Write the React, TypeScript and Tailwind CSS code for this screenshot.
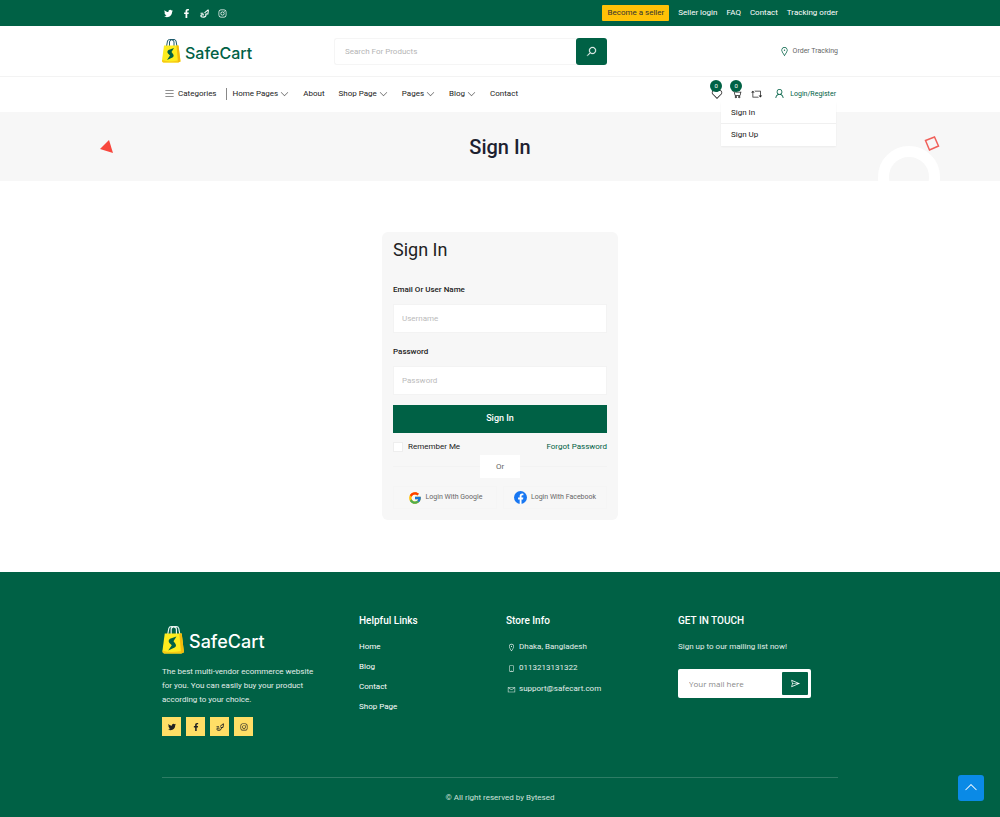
import React from 'react';
import {
  LiaAngleDownSolid,
  LiaAngleUpSolid,
  LiaBarsSolid,
  LiaEnvelope,
  LiaHeart,
  LiaMapMarkerSolid,
  LiaMobileSolid,
  LiaPaperPlane,
  LiaRetweetSolid,
  LiaSearchSolid,
  LiaShoppingCartSolid,
  LiaUser,
} from 'react-icons/lia';
import { FaFacebookF, FaInstagram, FaTwitter } from 'react-icons/fa';
import { FcGoogle } from 'react-icons/fc';

const Artist: React.FC<{ size: number }> = ({ size }) => (
  <svg viewBox="0 0 16 16" width={size} height={size} fill="none" stroke="currentColor" aria-hidden="true">
    <path d="M15 1 8 7M1 7.500h5M10 9h4l1-7" strokeWidth="1.800" />
    <path d="M10 8.500c2 3-.5 6-4 6-3 0-4.500-1-4.500-2.500S4 10 7 10.500" strokeWidth="2" />
  </svg>
);

const socials = [
  { label: 'Twitter', icon: FaTwitter },
  { label: 'Facebook', icon: FaFacebookF },
  { label: 'Community', icon: Artist },
  { label: 'Instagram', icon: FaInstagram },
];

const menu = [
  { label: 'Home Pages', sub: true },
  { label: 'About', sub: false },
  { label: 'Shop Page', sub: true },
  { label: 'Pages', sub: true },
  { label: 'Blog', sub: true },
  { label: 'Contact', sub: false },
];

const Bag: React.FC<{ className: string; handle: string }> = ({ className, handle }) => (
  <svg viewBox="0 0 38 48" className={className} aria-hidden="true">
    <path d="M9 15 11 4q1-3 4-3h9q3 0 4 3l2 11M15 14V6q0-4 4-4M24 14V6q0-4-4-4" fill="none" stroke={handle} strokeWidth="2" />
    <path d="M4 13h29l4 32-4 2H3q-3 0-3-4z" fill="#fdec1e" />
    <path d="M29 13h4l4 32-5 2z" fill="#f2b90c" />
    <path d="M0 42q12 5 32 1v4H3q-3 0-3-4z" fill="#f6c915" />
    <path d="M24 18 13 22q-4 3-1 7l4 4-6 9 11-5q4-3 1-7l-3-4z" fill="#006145" />
  </svg>
);

const TopBar = () => (
  <div className="bg-[#006145] text-white">
    <div className="mx-auto flex h-[26px] max-w-[676px] items-center justify-between">
      <div className="flex items-center gap-[9px] pl-[2px]">
        {socials.map(({ label, icon: Icon }) => (
          <a key={label} href="#" aria-label={label}>
            <Icon size={9} />
          </a>
        ))}
      </div>
      <div className="flex items-center gap-[9px] text-[8px] leading-4">
        <a href="#" className="rounded-[1px] bg-[#ffc107] px-[5px] text-[#333]">Become a seller</a>
        <a href="#">Seller login</a>
        <a href="#">FAQ</a>
        <a href="#">Contact</a>
        <a href="#">Tracking order</a>
      </div>
    </div>
  </div>
);

const SearchRow = () => (
  <div className="border-b border-[#f3f3f3]">
    <div className="mx-auto flex h-[50px] max-w-[676px] items-center">
      <a href="#" className="flex w-[172px] items-center gap-1">
        <Bag className="h-6 w-[19px]" handle="#1c5a6b" />
        <span className="pt-1 font-['Inter',sans-serif] text-[16px] leading-5 font-medium text-[#006145]">SafeCart</span>
      </a>
      <form className="flex w-[273px]" onSubmit={(e) => e.preventDefault()}>
        <input
          type="text"
          aria-label="Search"
          placeholder="Search For Products"
          className="h-[27px] min-w-0 flex-1 rounded-l-[3px] border border-r-0 border-[#f5f5f5] px-[10px] text-[8px] outline-none placeholder:text-[#b5b5b5]"
        />
        <button type="submit" aria-label="Search" className="flex h-[27px] w-[31px] items-center justify-center rounded-[3px] bg-[#006145] text-white">
          <LiaSearchSolid size={11} strokeWidth={1} />
        </button>
      </form>
      <a href="#" className="ml-auto flex items-center gap-[3px] text-[7px] leading-4 text-[#666]">
        <LiaMapMarkerSolid size={11} className="text-[#006145]" />
        Order Tracking
      </a>
    </div>
  </div>
);

const Counter: React.FC<{ label: string; icon: React.ReactNode }> = ({ label, icon }) => (
  <a href="#" aria-label={label} className="relative">
    {icon}
    <span className="absolute -top-2 -left-px flex h-3 w-3 items-center justify-center rounded-full bg-[#006145] text-[6px] text-white">0</span>
  </a>
);

const NavRow = () => (
  <nav>
    <div className="mx-auto flex h-[35px] max-w-[676px] items-center pb-[2px] text-[8px] leading-4 text-[#222]">
      <button type="button" className="flex items-center gap-[3px] pl-[2px]">
        <LiaBarsSolid size={11} />
        Categories
      </button>
      <span className="ml-[9px] h-3 w-px bg-[#888]" />
      <ul className="flex items-center gap-[14px] pl-[6px]">
        {menu.map(({ label, sub }) => (
          <li key={label}>
            <a href="#" className="flex items-center gap-[2px]">
              {label}
              {sub && <LiaAngleDownSolid size={9} className="text-[#666]" />}
            </a>
          </li>
        ))}
      </ul>
      <div className="ml-auto flex items-center gap-2">
        <Counter label="Wishlist" icon={<LiaHeart size={12} />} />
        <Counter label="Cart" icon={<LiaShoppingCartSolid size={12} />} />
        <a href="#" aria-label="Compare">
          <LiaRetweetSolid size={12} />
        </a>
        <div className="relative pr-[2px] pl-[2px]">
          <a href="#" className="flex items-center gap-1 text-[7px] text-[#006145]">
            <LiaUser size={13} />
            Login/Register
          </a>
          <div className="absolute top-4 right-[2px] z-10 w-[115px] bg-white text-[8px] text-[#222] shadow-xs">
            <a href="#" className="block border-b border-[#f0f0f0] px-[10px] leading-[21px]">Sign In</a>
            <a href="#" className="block px-[10px] leading-[22px]">Sign Up</a>
          </div>
        </div>
      </div>
    </div>
  </nav>
);

const Banner = () => (
  <div className="relative flex h-[69px] items-center justify-center overflow-hidden bg-[#f7f7f7]">
    <h2 className="text-[20px] leading-6 font-medium text-[#1d2130]">Sign In</h2>
    <svg viewBox="0 0 14 14" className="absolute top-7 left-[10%] h-[14px] w-[14px]" aria-hidden="true">
      <path d="M9 0 13 13 0 9z" fill="#f8473d" />
    </svg>
    <span className="absolute top-[34px] right-[6%] h-[62px] w-[62px] rounded-full border-[11px] border-white" />
    <svg viewBox="0 0 16 16" className="absolute top-6 right-[6%] h-4 w-4" aria-hidden="true">
      <path d="m1.500 4.500 9-3.500 4 9-9 4z" fill="none" stroke="#f0605a" strokeWidth="1.500" />
    </svg>
  </div>
);

const LoginForm = () => (
  <form
    className="mx-auto mt-[51px] mb-[52px] w-full max-w-[236px] rounded-[6px] bg-[#f7f7f7] px-[11px] pt-[5px] pb-[11px] text-[#222]"
    onSubmit={(e) => e.preventDefault()}
  >
    <h3 className="text-[18px] leading-[26px]">Sign In</h3>
    <label htmlFor="username" className="mt-[19px] block text-[8px] leading-4 font-medium">Email Or User Name</label>
    <input
      id="username"
      type="text"
      placeholder="Username"
      className="mt-[6px] block h-[29px] w-full border border-[#f3f3f3] bg-white px-2 text-[8px] outline-none placeholder:text-[#bbb]"
    />
    <label htmlFor="password" className="mt-[11px] block text-[8px] leading-4 font-medium">Password</label>
    <input
      id="password"
      type="password"
      placeholder="Password"
      className="mt-[6px] block h-[29px] w-full border border-[#f3f3f3] bg-white px-2 text-[8px] outline-none placeholder:text-[#bbb]"
    />
    <button type="submit" className="mt-[10px] block h-7 w-full bg-[#006145] text-[9px] font-medium text-white">Sign In</button>
    <div className="mt-[6px] flex items-center justify-between text-[8px] leading-4">
      <label className="flex items-center gap-[5px]">
        <input type="checkbox" className="h-[10px] w-[10px] appearance-none border border-[#eee] bg-white" />
        Remember Me
      </label>
      <a href="#" className="text-[#006145]">Forgot Password</a>
    </div>
    <div className="flex items-center">
      <span className="h-px flex-1 bg-[#f3f3f3]" />
      <span className="w-10 bg-white text-center text-[8px] leading-[23px] text-[#666]">Or</span>
      <span className="h-px flex-1 bg-[#f3f3f3]" />
    </div>
    <div className="mt-2 flex justify-between text-[7px] text-[#666]">
      <button type="button" className="flex h-[23px] w-[104px] items-center justify-center gap-1 border border-[#f5f5f5]">
        <FcGoogle size={14} />
        Login With Google
      </button>
      <button type="button" className="flex h-[23px] w-[104px] items-center justify-center gap-1 border border-[#f5f5f5]">
        <svg viewBox="0 0 24 24" className="h-[13px] w-[13px]" aria-hidden="true">
          <circle cx="12" cy="12" r="12" fill="#1877f2" />
          <path d="M16.700 15.500l.5-3.500h-3.300V9.800c0-1 .5-1.900 2-1.900h1.500V5c-4.600-.9-6.900.7-6.900 4.300V12H7.500v3.500h3V24h3.400v-8.500z" fill="#fff" />
        </svg>
        Login With Facebook
      </button>
    </div>
  </form>
);

const Footer = () => (
  <footer className="relative bg-[#006145] text-white">
    <div className="mx-auto max-w-[676px]">
      <div className="flex h-[206px] items-start border-b border-[#2d7d65] pt-[41px] text-[8px]">
        <div className="w-[197px] pt-[13px]">
          <a href="#" className="flex items-center gap-1">
            <Bag className="h-7 w-[23px]" handle="#e8f4f0" />
            <span className="pt-1 font-['Inter',sans-serif] text-[18px] leading-6 font-medium">SafeCart</span>
          </a>
          <p className="mt-[11px] w-[160px] leading-[14px] text-[#e3eeea]">
            The best multi-vendor ecommerce website for you. You can easily buy your product according to your choice.
          </p>
          <div className="mt-[10px] flex gap-[5px]">
            {socials.map(({ label, icon: Icon }) => (
              <a key={label} href="#" aria-label={label} className="flex h-[19px] w-[19px] items-center justify-center bg-[#ffde66] text-[#222]">
                <Icon size={8} />
              </a>
            ))}
          </div>
        </div>
        <div className="w-[147px]">
          <h4 className="text-[10px] leading-4 font-medium">Helpful Links</h4>
          <ul className="mt-[10px] flex flex-col gap-1 leading-4">
            <li><a href="#">Home</a></li>
            <li><a href="#">Blog</a></li>
            <li><a href="#">Contact</a></li>
            <li><a href="#">Shop Page</a></li>
          </ul>
        </div>
        <div className="w-[172px]">
          <h4 className="text-[10px] leading-4 font-medium">Store Info</h4>
          <ul className="mt-[10px] flex flex-col gap-[5px] leading-4 text-[#e3eeea]">
            <li className="flex items-center gap-[3px] pl-[1px]"><LiaMapMarkerSolid size={9} />Dhaka, Bangladesh</li>
            <li className="flex items-center gap-[3px] pl-[1px]"><LiaMobileSolid size={9} />0113213131322</li>
            <li className="flex items-center gap-[3px] pl-[1px]"><LiaEnvelope size={9} />support@safecart.com</li>
          </ul>
        </div>
        <div className="flex-1">
          <h4 className="text-[10px] leading-4 font-medium">GET IN TOUCH</h4>
          <p className="mt-[10px] leading-4 text-[#e3eeea]">Sign up to our mailing list now!</p>
          <form className="mt-[14px] flex h-[29px] w-[133px] items-center rounded-[2px] bg-white pr-[3px]" onSubmit={(e) => e.preventDefault()}>
            <input
              type="email"
              aria-label="Your mail"
              placeholder="Your mail here"
              className="min-w-0 flex-1 pl-[11px] font-['Open_Sans',sans-serif] text-[8px] outline-none placeholder:text-[#888]"
            />
            <button type="submit" aria-label="Subscribe" className="flex h-[23px] w-[26px] items-center justify-center rounded-[1px] bg-[#006145]">
              <LiaPaperPlane size={11} />
            </button>
          </form>
        </div>
      </div>
      <p className="pt-3 pb-[11px] text-center text-[8px] leading-4 text-[#cfe2db]">© All right reserved by Bytesed</p>
    </div>
    <button type="button" aria-label="Back to top" className="absolute right-4 bottom-4 flex h-[26px] w-[26px] items-center justify-center rounded-[3px] bg-[#0a8ae6]">
      <LiaAngleUpSolid size={14} />
    </button>
  </footer>
);

export default function App() {
  return (
    <div className="min-h-screen bg-white font-['Roboto',sans-serif]">
      <header>
        <TopBar />
        <SearchRow />
        <NavRow />
      </header>
      <Banner />
      <main>
        <LoginForm />
      </main>
      <Footer />
    </div>
  );
}
